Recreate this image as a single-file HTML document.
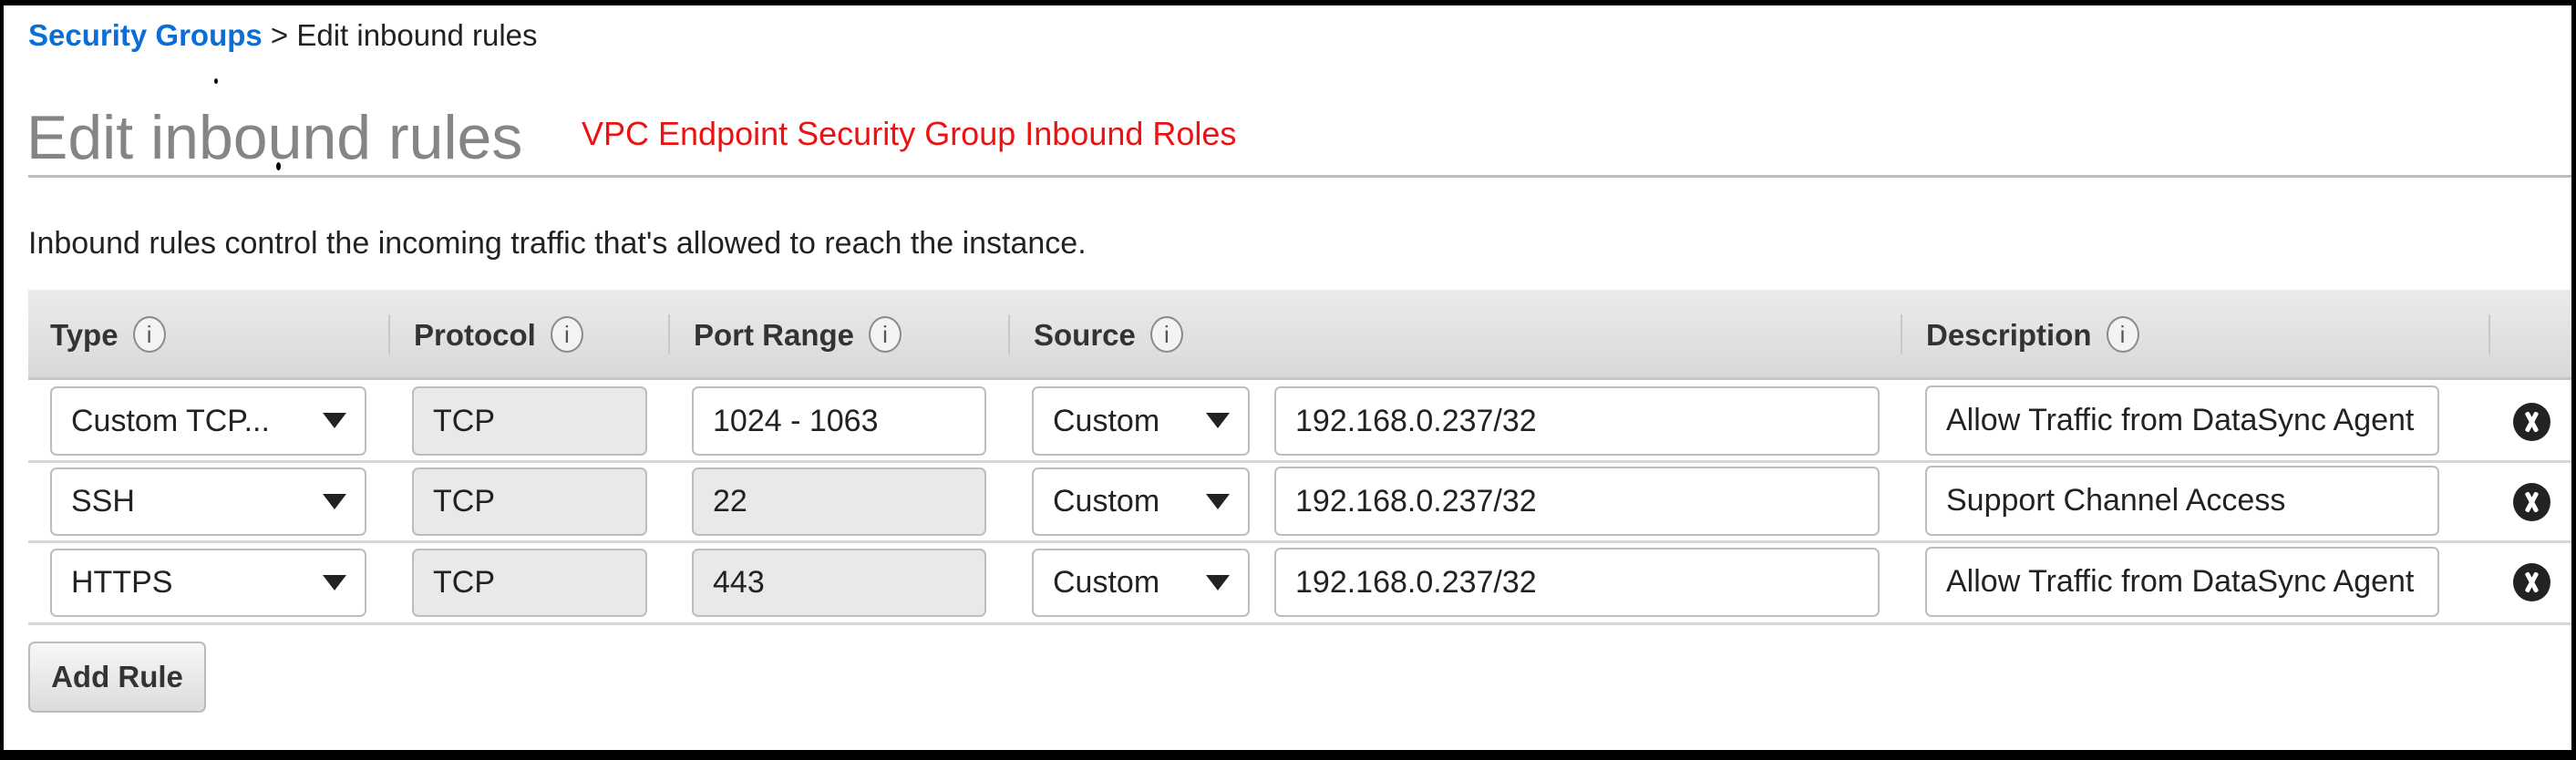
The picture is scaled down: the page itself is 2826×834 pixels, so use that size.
<!DOCTYPE html>
<html><head><meta charset="utf-8"><style>
*{box-sizing:border-box;margin:0;padding:0}
body{width:2826px;height:834px;background:#fff;position:relative;overflow:hidden;font-family:"Liberation Sans",Arial,sans-serif;color:#222}
.frame{position:absolute;left:0;top:0;width:2826px;height:834px;border-top:6px solid #000;border-left:4px solid #000;border-right:5px solid #000;border-bottom:11px solid #000}
.a{position:absolute;white-space:nowrap}
.hdr{position:absolute;left:31px;top:318px;width:2790px;height:99px;background:linear-gradient(#ebebeb,#d9d9d9);border-bottom:3px solid #c6c6c6}
.hs{position:absolute;top:345px;width:2px;height:44px;background:#c8c8c8}
.ht{position:absolute;top:349px;font-size:33px;font-weight:bold;color:#333;line-height:38px}
.info{display:inline-block;width:36px;height:40px;border:2px solid #8a8a8a;border-radius:50%;font-size:26px;font-weight:normal;text-align:center;line-height:36px;color:#555;margin-left:16px;vertical-align:middle;position:relative;top:-3px;background:#f3f3f3}
.in{position:absolute;border:2px solid #bdbdbd;border-radius:7px;background:#fff;font-size:34px;padding-left:21px;color:#222;display:flex;align-items:center}
.dis{background:#e9e9e9}
.arr{position:absolute;right:20px;top:50%;margin-top:-9px;width:0;height:0;border-left:13px solid transparent;border-right:13px solid transparent;border-top:17px solid #222}
.line{position:absolute;left:31px;width:2790px;height:3px;background:#d6d6d6}
.x{position:absolute;width:41px;height:42px;border-radius:50%;background:#222}
.x:before,.x:after{content:"";position:absolute;left:18px;top:9px;width:5px;height:24px;background:#fff;border-radius:2px;transform:rotate(28deg)}
.x:after{transform:rotate(-28deg)}
</style></head><body>
<div class="a" style="left:31px;top:20px;font-size:33px;line-height:38px"><span style="color:#0a6ed8;font-weight:bold">Security Groups</span> &gt; Edit inbound rules</div>
<div class="a" style="left:235px;top:86px;width:4px;height:6px;background:#000;border-radius:50%"></div>
<div class="a" style="left:303px;top:178px;width:5px;height:9px;background:#000;border-radius:50%"></div>
<div class="a" style="left:29px;top:112px;font-size:68px;line-height:78px;color:#858585">Edit inbound rules</div>
<div class="a" style="left:638px;top:126px;font-size:36px;line-height:42px;color:#ee1111">VPC Endpoint Security Group Inbound Roles</div>
<div class="a" style="left:31px;top:192px;width:2790px;height:3px;background:#bdbdbd"></div>
<div class="a" style="left:31px;top:248px;font-size:34px;line-height:38px">Inbound rules control the incoming traffic that's allowed to reach the instance.</div>
<div class="hdr"></div>
<div class="hs" style="left:426px"></div><div class="hs" style="left:733px"></div><div class="hs" style="left:1106px"></div><div class="hs" style="left:2085px"></div><div class="hs" style="left:2730px"></div>
<div class="ht" style="left:55px">Type<span class="info">i</span></div>
<div class="ht" style="left:454px">Protocol<span class="info">i</span></div>
<div class="ht" style="left:761px">Port Range<span class="info">i</span></div>
<div class="ht" style="left:1134px">Source<span class="info">i</span></div>
<div class="ht" style="left:2113px">Description<span class="info">i</span></div>

<div class="in" style="left:55px;top:424px;width:347px;height:76px">Custom TCP...<span class="arr"></span></div>
<div class="in dis" style="left:452px;top:424px;width:258px;height:76px">TCP</div>
<div class="in" style="left:759px;top:424px;width:323px;height:76px">1024 - 1063</div>
<div class="in" style="left:1132px;top:424px;width:239px;height:76px">Custom<span class="arr"></span></div>
<div class="in" style="left:1398px;top:424px;width:664px;height:76px">192.168.0.237/32</div>
<div class="in" style="left:2112px;top:423px;width:564px;height:77px">Allow Traffic from DataSync Agent</div>
<div class="x" style="left:2757px;top:442px"></div>
<div class="line" style="top:505px"></div>

<div class="in" style="left:55px;top:513px;width:347px;height:75px">SSH<span class="arr"></span></div>
<div class="in dis" style="left:452px;top:513px;width:258px;height:75px">TCP</div>
<div class="in dis" style="left:759px;top:513px;width:323px;height:75px">22</div>
<div class="in" style="left:1132px;top:513px;width:239px;height:75px">Custom<span class="arr"></span></div>
<div class="in" style="left:1398px;top:512px;width:664px;height:76px">192.168.0.237/32</div>
<div class="in" style="left:2112px;top:511px;width:564px;height:77px">Support Channel Access</div>
<div class="x" style="left:2757px;top:530px"></div>
<div class="line" style="top:593px"></div>

<div class="in" style="left:55px;top:602px;width:347px;height:75px">HTTPS<span class="arr"></span></div>
<div class="in dis" style="left:452px;top:602px;width:258px;height:75px">TCP</div>
<div class="in dis" style="left:759px;top:602px;width:323px;height:75px">443</div>
<div class="in" style="left:1132px;top:602px;width:239px;height:75px">Custom<span class="arr"></span></div>
<div class="in" style="left:1398px;top:601px;width:664px;height:76px">192.168.0.237/32</div>
<div class="in" style="left:2112px;top:600px;width:564px;height:77px">Allow Traffic from DataSync Agent</div>
<div class="x" style="left:2757px;top:618px"></div>
<div class="line" style="top:683px"></div>

<div class="a" style="left:31px;top:704px;width:195px;height:78px;border:2px solid #bbb;border-radius:7px;background:linear-gradient(#f7f7f7,#dcdcdc);font-size:33px;font-weight:bold;color:#333;text-align:center;line-height:74px">Add Rule</div>
<div class="frame"></div>
</body></html>
